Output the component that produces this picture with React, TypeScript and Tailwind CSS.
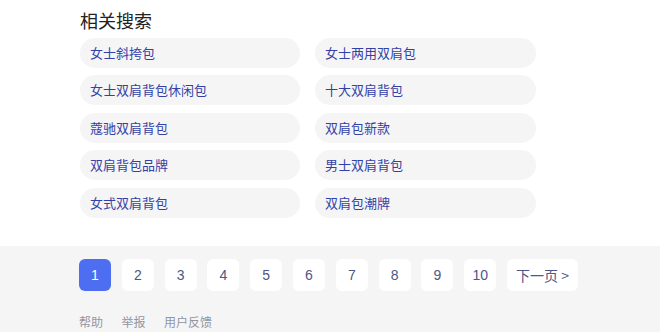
import React from 'react';

const related = [
  '女士斜挎包',
  '女士两用双肩包',
  '女士双肩背包休闲包',
  '十大双肩背包',
  '蔻驰双肩背包',
  '双肩包新款',
  '双肩背包品牌',
  '男士双肩背包',
  '女式双肩背包',
  '双肩包潮牌',
];

const pages = [1, 2, 3, 4, 5, 6, 7, 8, 9, 10];

export default function App() {
  return (
    <div
      className="w-[660px] h-[332px] overflow-hidden bg-white"
      style={{ fontFamily: '"Noto Sans CJK SC", "Liberation Sans", Arial, sans-serif' }}
    >
      {/* Related searches */}
      <div className="h-[246px] pl-[80px] pt-[8px]">
        <h3 className="text-[18px] leading-[24px] text-[#222222] font-normal">相关搜索</h3>
        <div className="mt-[5.5px] grid grid-cols-[220px_221px] gap-x-[15px] gap-y-[7.5px]">
          {related.map((item) => (
            <a
              key={item}
              href="#"
              className="h-[30px] flex items-center rounded-full bg-[#f5f5f6] pl-[10px] text-[13px] text-[#3341a6]"
            >
              {item}
            </a>
          ))}
        </div>
      </div>

      {/* Pagination */}
      <div className="h-[86px] bg-[#f5f5f6] pl-[79px] pt-[13px]">
        <div className="flex gap-[10.8px]">
          {pages.map((p) => (
            <a
              key={p}
              href="#"
              className={
                p === 1
                  ? 'w-[32px] h-[32px] flex items-center justify-center rounded-[6px] bg-[#4e6ef2] text-white text-[14px]'
                  : 'w-[32px] h-[32px] flex items-center justify-center rounded-[6px] bg-white text-[#4e5589] text-[14px]'
              }
              style={{ fontFamily: 'Arial, "Liberation Sans", sans-serif' }}
            >
              {p}
            </a>
          ))}
          <a
            href="#"
            className="w-[71px] h-[32px] flex items-center justify-center rounded-[6px] bg-white text-[#4e5589] text-[14px]"
          >
            下一页 &gt;
          </a>
        </div>
        <div className="mt-[23px] flex gap-[18.5px] text-[12px] leading-[16px] text-[#9195a3]">
          <a href="#">帮助</a>
          <a href="#">举报</a>
          <a href="#">用户反馈</a>
        </div>
      </div>
    </div>
  );
}
